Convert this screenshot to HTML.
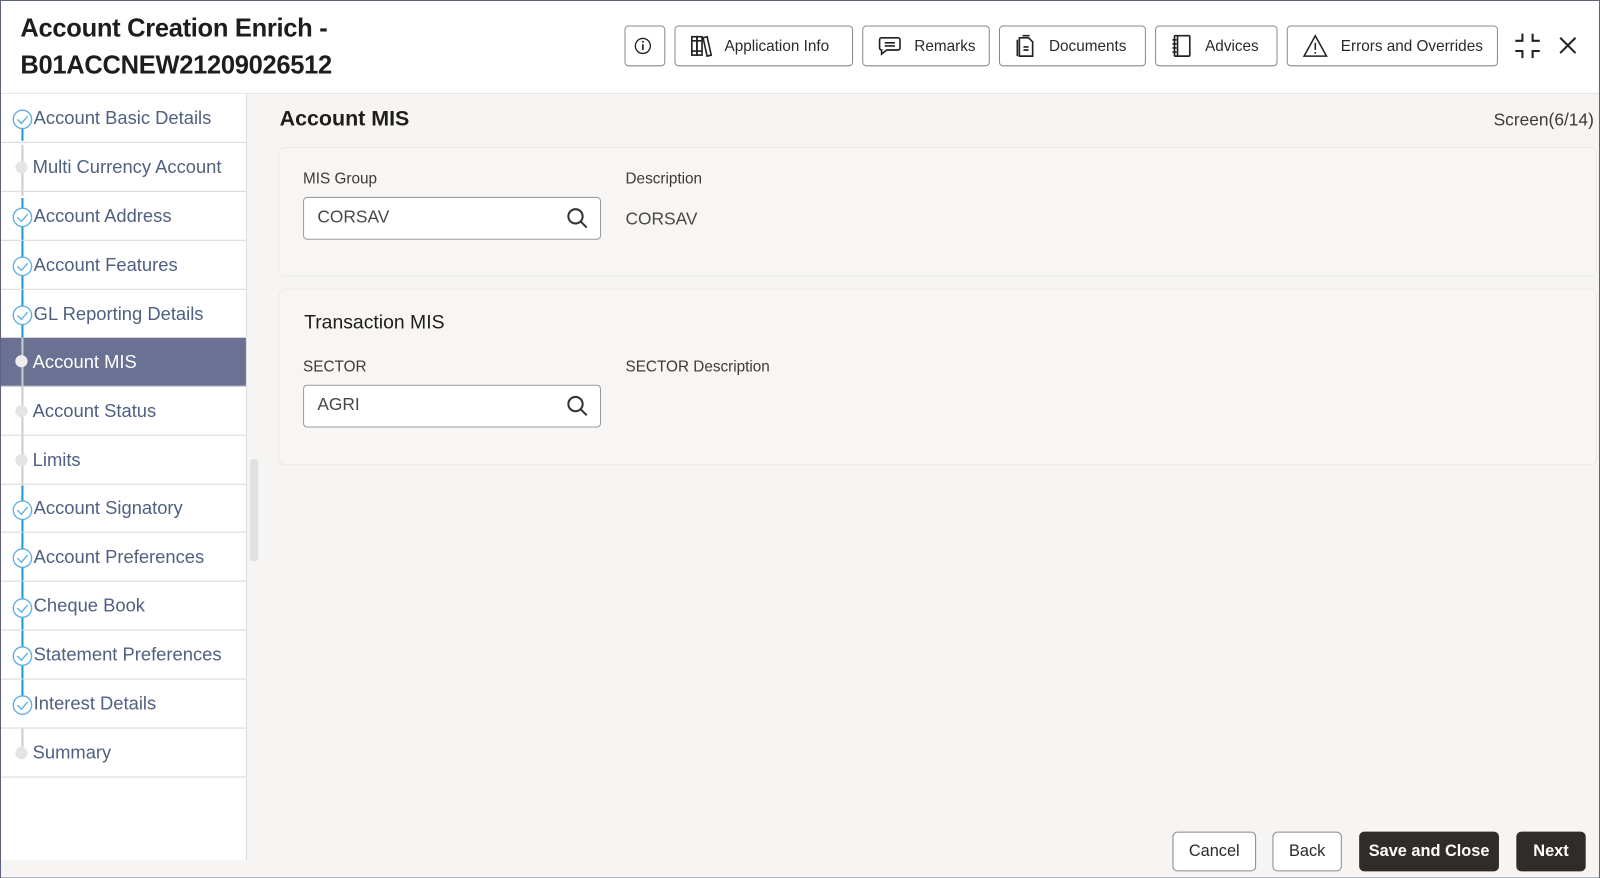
<!DOCTYPE html>
<html><head><style>
*{box-sizing:border-box;margin:0;padding:0}
html,body{width:1600px;height:878px;overflow:hidden}
body{font-family:"Liberation Sans",sans-serif;background:#f6f5f3;position:relative}
#wrap{position:absolute;left:0;top:0;width:1568px;height:861px;transform:scale(1.0204);transform-origin:0 0}
.frame{position:absolute;left:0;top:0;width:1568px;height:861px;border:1px solid #5d6283;pointer-events:none;z-index:9}
.hdr{position:absolute;left:0;top:0;width:1568px;height:92px;background:#fff;border-bottom:1px solid #e2e1df}
.title{position:absolute;left:20px;top:10px;font-size:25px;line-height:36px;color:#1f1d1b;font-weight:bold;letter-spacing:-0.3px}
.btn{position:absolute;top:25px;height:40px;border:1px solid #8a8987;border-radius:4px;background:#fff;font-size:15px;color:#2c2a28;display:flex;align-items:center;padding-left:14px}
.btn svg{margin-right:12px}
.side{position:absolute;left:0;top:92px;width:242px;height:751px;background:#fff;border-right:1px solid #dcdcdc}
.it{position:absolute;left:0;width:241px;border-bottom:1px solid #d8d8d8;font-size:18px;color:#4f6080}
.it span{position:absolute;left:33px;top:50%;transform:translateY(-50%);white-space:nowrap}
.act{background:#6a7192;color:#fff}
.line{position:absolute;left:21px;width:2px}
.main{position:absolute;left:242px;top:92px;width:1326px;height:769px}
.panel{position:absolute;left:31px;width:1292px;background:#f7f6f4;border:1px solid #ebeae8;border-radius:6px}
.lbl{position:absolute;font-size:15px;color:#3c3a38}
.inp{position:absolute;width:292px;height:42px;background:#fff;border:1px solid #9c9b99;border-radius:4px;font-size:17px;color:#4a4846;padding:9px 0 0 13px}
.inp svg{position:absolute;right:11px;top:9px}
.fb{position:absolute;top:815px;height:39px;border-radius:5px;font-size:16px;display:flex;align-items:center;justify-content:center}
</style></head><body><div id="wrap">
<div class="hdr">
<div class="title">Account Creation Enrich -<br>B01ACCNEW21209026512</div>
<div class="btn" style="left:612px;width:40px;padding-left:8px"><svg width="22" height="22" viewBox="0 0 22 22"><circle cx="11" cy="11" r="9" fill="none" stroke="#222" stroke-width="1.6"/><rect x="10" y="9" width="2" height="7" fill="#222"/><circle cx="11" cy="6" r="1.2" fill="#222"/></svg></div>
<div class="btn" style="left:661px;width:175px"><svg width="22" height="22" viewBox="0 0 22 22" fill="none" stroke="#222" stroke-width="1.6"><rect x="2" y="2" width="5" height="18"/><rect x="7" y="2" width="5" height="18"/><path d="M13 3l4-1 4 18-4 1z"/><path d="M2 6h10M2 16h10"/></svg>Application Info</div>
<div class="btn" style="left:845px;width:125px"><svg width="24" height="22" viewBox="0 0 24 22" fill="none" stroke="#222" stroke-width="1.6"><path d="M4 3h16a2 2 0 0 1 2 2v8a2 2 0 0 1-2 2H9l-5 4v-4a2 2 0 0 1-2-2V5a2 2 0 0 1 2-2z"/><path d="M7 8h10M7 11h10"/></svg>Remarks</div>
<div class="btn" style="left:979px;width:144px"><svg width="22" height="24" viewBox="0 0 22 24" fill="none" stroke="#222" stroke-width="1.6"><path d="M5 4h9l4 4v14H5z"/><path d="M3 6v16M8 2h7"/><path d="M9 13h5M9 16h5"/></svg>Documents</div>
<div class="btn" style="left:1132px;width:120px"><svg width="22" height="24" viewBox="0 0 22 24" fill="none" stroke="#222" stroke-width="1.6"><rect x="4" y="2" width="15" height="20" rx="1"/><path d="M7 2v20M2 6h4M2 10h4M2 14h4M2 18h4"/></svg>Advices</div>
<div class="btn" style="left:1261px;width:207px"><svg width="26" height="24" viewBox="0 0 26 24" fill="none" stroke="#222" stroke-width="1.5"><path d="M13 2L24 22H2z"/><path d="M13 9v7M13 18v1.5"/></svg>Errors and Overrides</div>
<svg style="position:absolute;left:1484px;top:32px" width="26" height="26" viewBox="0 0 26 26" fill="none" stroke="#222" stroke-width="2"><path d="M8 1v7H1M18 1v7h7M8 25v-7H1M18 25v-7h7"/></svg>
<svg style="position:absolute;left:1528px;top:36px" width="17" height="17" viewBox="0 0 17 17" stroke="#222" stroke-width="2"><path d="M1 1l15 15M16 1L1 16"/></svg>
</div>

<div class="side">
<div class="line" style="top:20px;height:26px;background:#1a9ad6"></div>
<div class="line" style="top:50px;height:50px;background:#ccc"></div>
<div class="line" style="top:102px;height:140px;background:#1a9ad6"></div>
<div class="line" style="top:240px;height:150px;background:#ccc"></div>
<div class="line" style="top:384px;height:224px;background:#1a9ad6"></div>
<div class="line" style="top:622px;height:30px;background:#ccc"></div>
</div>
<div style="position:absolute;left:0;top:0">
<div class="it" style="top:92px;height:48px"><span>Account Basic Details</span></div>
<div class="it" style="top:140px;height:48px"><span style="left:32px">Multi Currency Account</span></div>
<div class="it" style="top:188px;height:48px"><span>Account Address</span></div>
<div class="it" style="top:236px;height:48px"><span>Account Features</span></div>
<div class="it" style="top:284px;height:48px"><span>GL Reporting Details</span></div>
<div class="it act" style="top:331px;height:48px"><div class="line" style="top:0;height:48px;background:#ccc"></div><span style="left:32px">Account MIS</span></div>
<div class="it" style="top:379px;height:48px"><span style="left:32px">Account Status</span></div>
<div class="it" style="top:427px;height:48px"><span style="left:32px">Limits</span></div>
<div class="it" style="top:475px;height:47px"><span>Account Signatory</span></div>
<div class="it" style="top:522px;height:48px"><span>Account Preferences</span></div>
<div class="it" style="top:570px;height:48px"><span>Cheque Book</span></div>
<div class="it" style="top:618px;height:48px"><span>Statement Preferences</span></div>
<div class="it" style="top:666px;height:48px"><span>Interest Details</span></div>
<div class="it" style="top:714px;height:48px"><span style="left:32px">Summary</span></div>
</div>
<svg style="position:absolute;left:0;top:0" width="40" height="860">
<g fill="#fff" stroke="#5aaee0" stroke-width="1.3">
<circle cx="22" cy="117" r="9"/><circle cx="22" cy="213" r="9"/><circle cx="22" cy="261" r="9"/><circle cx="22" cy="309" r="9"/><circle cx="22" cy="500" r="9"/><circle cx="22" cy="547" r="9"/><circle cx="22" cy="596" r="9"/><circle cx="22" cy="643" r="9"/><circle cx="22" cy="691" r="9"/>
</g>
<g fill="none" stroke="#5aaee0" stroke-width="1.3">
<path d="M17 117l4 4 6-7"/><path d="M17 213l4 4 6-7"/><path d="M17 261l4 4 6-7"/><path d="M17 309l4 4 6-7"/><path d="M17 500l4 4 6-7"/><path d="M17 547l4 4 6-7"/><path d="M17 596l4 4 6-7"/><path d="M17 643l4 4 6-7"/><path d="M17 691l4 4 6-7"/>
</g>
<g fill="#e4e4e4"><circle cx="21" cy="164" r="6"/><circle cx="21" cy="403" r="6"/><circle cx="21" cy="451" r="6"/><circle cx="21" cy="738" r="6"/></g>
<circle cx="21" cy="354" r="6" fill="#eee"/>
</svg>
<div style="position:absolute;left:245px;top:450px;width:8px;height:100px;background:#e0e0e0;border-radius:3px"></div>

<div class="main">
<div style="position:absolute;left:32px;top:13px;font-size:21px;font-weight:bold;color:#1f1d1b">Account MIS</div>
<div style="position:absolute;right:6px;top:16px;font-size:17px;color:#3c3a38">Screen(6/14)</div>
<div class="panel" style="top:52px;height:127px">
<div class="lbl" style="left:23px;top:22px">MIS Group</div>
<div class="lbl" style="left:339px;top:22px">Description</div>
<div class="inp" style="left:23px;top:48px">CORSAV<svg width="22" height="22" viewBox="0 0 22 22" fill="none" stroke="#333" stroke-width="2"><circle cx="9" cy="9" r="7"/><path d="M14 14l6 6"/></svg></div>
<div style="position:absolute;left:339px;top:60px;font-size:17px;color:#4a4846">CORSAV</div>
</div>
<div class="panel" style="top:191px;height:173px">
<div style="position:absolute;left:24px;top:22px;font-size:19px;color:#1f1d1b">Transaction MIS</div>
<div class="lbl" style="left:23px;top:67px">SECTOR</div>
<div class="lbl" style="left:339px;top:67px">SECTOR Description</div>
<div class="inp" style="left:23px;top:93px">AGRI<svg width="22" height="22" viewBox="0 0 22 22" fill="none" stroke="#333" stroke-width="2"><circle cx="9" cy="9" r="7"/><path d="M14 14l6 6"/></svg></div>
</div>
</div>
<div class="fb" style="left:1149px;width:82px;border:1px solid #8a8987;background:#fff;color:#2c2a28">Cancel</div>
<div class="fb" style="left:1247px;width:68px;border:1px solid #8a8987;background:#fff;color:#2c2a28">Back</div>
<div class="fb" style="left:1332px;width:137px;background:#302c29;color:#fff;font-weight:bold">Save and Close</div>
<div class="fb" style="left:1486px;width:68px;background:#302c29;color:#fff;font-weight:bold">Next</div>
<div class="frame"></div>
</div></body></html>
